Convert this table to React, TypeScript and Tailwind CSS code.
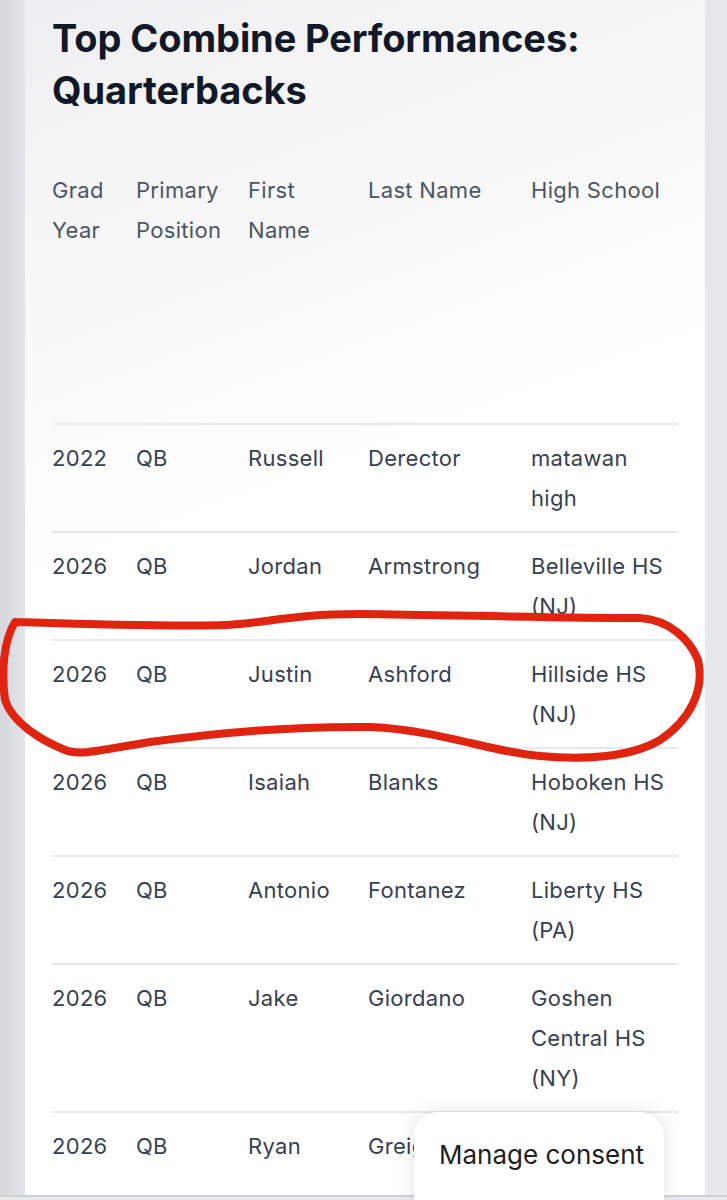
import React from "react";

const rows = [
  ["2022", "QB", "Russell", "Derector", "matawan high"],
  ["2026", "QB", "Jordan", "Armstrong", "Belleville HS (NJ)"],
  ["2026", "QB", "Justin", "Ashford", "Hillside HS (NJ)"],
  ["2026", "QB", "Isaiah", "Blanks", "Hoboken HS (NJ)"],
  ["2026", "QB", "Antonio", "Fontanez", "Liberty HS (PA)"],
  ["2026", "QB", "Jake", "Giordano", "Goshen Central HS (NY)"],
  ["2026", "QB", "Ryan", "Greig", ""],
];

const cols = "grid grid-cols-[84px_112px_120px_163px_147px]";

export default function App() {
  return (
    <div
      className="relative h-[1200px] overflow-hidden bg-[#e6e7eb] flex flex-col"
      style={{ fontFamily: "Inter, 'Noto Sans', sans-serif" }}
    >
      <div className="flex flex-1 min-h-0">
        {/* left strip */}
        <div className="w-[25px] bg-[linear-gradient(90deg,#d6d8dd,#e3e4e8)]" />

        {/* Panel */}
        <div className="w-[680px] bg-[linear-gradient(160deg,#efeff1_0%,#ffffff_40%)] pt-[12px] pl-[27px]">
          <h1 className="text-[38px] leading-[52px] font-bold text-[#111827] tracking-[-0.1px]">
            Top Combine Performances:
            <br />
            Quarterbacks
          </h1>

          <div className="mt-[54px] w-[626px] text-[22px] leading-[40px] tracking-[0.3px]">
            {/* Header */}
            <div className={`${cols} h-[253px] text-[#4b5563]`}>
              <div className="pr-[10px]">Grad Year</div>
              <div className="pr-[10px]">Primary Position</div>
              <div className="pr-[10px]">First Name</div>
              <div className="pr-[10px]">Last Name</div>
              <div>High School</div>
            </div>

            {rows.map((r, i) => (
              <div
                key={i}
                className={`${cols} border-t-2 border-[#e8e9ec] py-[13px] text-[#374151]`}
              >
                {r.map((c, j) => (
                  <div key={j}>{c}</div>
                ))}
              </div>
            ))}
          </div>
        </div>

        {/* right strip */}
        <div className="flex-1 bg-[#e6e7eb]" />
      </div>

      {/* bottom strip */}
      <div className="h-[5px] border-t-2 border-[#cfd0d4] bg-[#e9eaed]" />

      {/* Manage consent */}
      <div className="absolute left-[414px] top-[1112px] w-[250px] h-[90px] bg-white rounded-t-[24px] shadow-[0_0_18px_rgba(0,0,0,0.12)] pl-[25px] pt-[23px]">
        <span className="text-[26px] leading-[40px] text-[#1f1f1f]">Manage consent</span>
      </div>

      {/* Red hand-drawn circle */}
      <svg
        className="absolute left-0 top-0 pointer-events-none"
        width="727"
        height="1200"
        viewBox="0 0 727 1200"
      >
        <path
          d="M 15 622 C 80 624, 200 628, 240 624 C 280 620, 300 614, 360 614 C 450 615, 560 618, 640 618 C 670 620, 690 640, 698 660 C 705 690, 690 720, 660 740 C 630 758, 580 760, 540 756 C 490 752, 440 730, 370 727 C 280 726, 200 735, 150 742 C 100 750, 80 756, 65 750 C 40 740, 12 722, 5 700 C 1 670, 4 640, 15 622 Z"
          fill="none"
          stroke="#e02410"
          strokeWidth="8"
          strokeLinecap="round"
          strokeLinejoin="round"
        />
      </svg>
    </div>
  );
}
